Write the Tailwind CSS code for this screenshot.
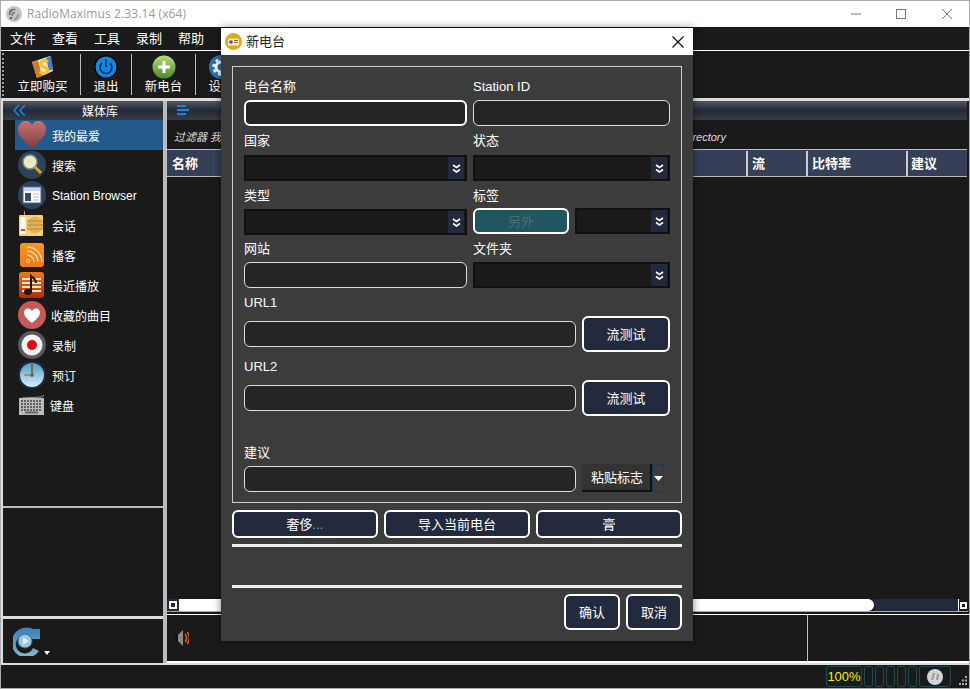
<!DOCTYPE html>
<html lang="zh">
<head>
  <meta charset="UTF-8" />
  <title>RadioMaximus</title>
  <script src="https://cdn.jsdelivr.net/npm/@tailwindcss/browser@4"></script>
</head>
<body class="w-[970px] h-[689px] overflow-hidden bg-[#1a1a1a] font-['Liberation_Sans','Noto_Sans_CJK_SC',sans-serif] text-[13px] text-white">

<div class="relative flex flex-col w-[970px] h-[689px] border-x border-b border-t border-[#aaa]">

  <!-- title bar -->
  <header class="flex items-center h-[26px] bg-white text-[#999] shrink-0">
    <svg class="ml-[5px] w-[16px] h-[16px]" viewBox="0 0 16 16">
      <circle cx="8" cy="8" r="8" fill="#c4c4c4"/>
      <g fill="none" stroke="#6a6a6a" stroke-width="1.300"><path d="M3.500 9a5.500 5.500 0 0 1 6-5.500M3.500 5.500A9 9 0 0 1 7 3M6 10a3 3 0 0 1 3-3.500"/></g>
      <circle cx="5" cy="12" r="1.300" fill="#6a6a6a"/><path d="M8 13a4 4 0 0 0 4-5" fill="none" stroke="#888" stroke-width="1.300"/>
    </svg>
    <span class="ml-[5px] text-[12px] font-['Open_Sans'] tracking-[0.1px]">RadioMaximus 2.33.14 (x64)</span>
    <div class="ml-auto flex items-center text-[#777]">
      <svg class="w-[12px] h-[12px]" viewBox="0 0 12 12"><path d="M1 6h10" stroke="#777"/></svg>
      <svg class="ml-[33px] w-[12px] h-[12px]" viewBox="0 0 12 12"><rect x="1.500" y="1.500" width="9" height="9" fill="none" stroke="#777"/></svg>
      <svg class="ml-[34px] mr-[16px] w-[12px] h-[12px]" viewBox="0 0 12 12"><path d="M1 1l10 10M11 1L1 11" stroke="#777"/></svg>
    </div>
  </header>

  <!-- menu -->
  <nav class="flex items-center gap-[16px] h-[22px] pl-[9px] pt-px border-b border-white shrink-0 box-content">
    <span>文件</span><span>查看</span><span>工具</span><span>录制</span><span>帮助</span>
  </nav>

  <!-- toolbar -->
  <div class="flex h-[47px] shrink-0 border-b-[3px] border-[#ddd] box-content text-[12.5px]">
    <div class="w-[3px] my-[2px] ml-[1px] border-l-2 border-dotted border-[#999]"></div>
    <div class="flex flex-col items-center w-[75px] pt-[4px]">
      <svg class="w-[24px] h-[24px]" viewBox="0 0 24 24">
        <path d="M1 7l18-6 3 15-16 7z" fill="#ece8d4"/><path d="M1 7l6-2 4 16-5 2z" fill="#c8822a"/><path d="M15 3l5-2 2 13-4 2z" fill="#4c7cc4"/>
        <path d="M17 7c-3-3-8-1-7 2.500s7 2 7 5.500-6 4.500-8 1.500" fill="none" stroke="#f2c21f" stroke-width="3"/>
      </svg>
      <span class="leading-[17px]">立即购买</span>
    </div>
    <div class="w-px my-[3px] bg-[#bbb]"></div>
    <div class="flex flex-col items-center w-[50px] pt-[4px]">
      <svg class="w-[24px] h-[24px]" viewBox="0 0 24 24">
        <circle cx="12" cy="12" r="12" fill="#050505"/><circle cx="12" cy="12" r="10.500" fill="#0a8ae6"/>
        <path d="M8 8a6 6 0 1 0 8 0" fill="none" stroke="#06294a" stroke-width="1.600"/><path d="M12 4.500V12" stroke="#06294a" stroke-width="1.600"/>
      </svg>
      <span class="leading-[17px]">退出</span>
    </div>
    <div class="w-px my-[3px] bg-[#bbb]"></div>
    <div class="flex flex-col items-center w-[63px] pt-[4px]">
      <svg class="w-[24px] h-[24px]" viewBox="0 0 24 24">
        <defs><linearGradient id="g1" x1="0" y1="0" x2="0" y2="1"><stop offset="0" stop-color="#b4dc7c"/><stop offset="1" stop-color="#4d8a24"/></linearGradient></defs>
        <circle cx="12" cy="12" r="11.500" fill="url(#g1)"/><path d="M12 6v12M6 12h12" stroke="#fff" stroke-width="3"/>
      </svg>
      <span class="leading-[17px]">新电台</span>
    </div>
    <div class="w-px my-[3px] bg-[#bbb]"></div>
    <div class="flex flex-col items-center w-[50px] pt-[4px]">
      <svg class="w-[24px] h-[24px]" viewBox="0 0 24 24">
        <circle cx="12" cy="12" r="12" fill="#2a72b0"/><circle cx="12" cy="12" r="5" fill="none" stroke="#fff" stroke-width="3"/><circle cx="12" cy="12" r="7.500" fill="none" stroke="#fff" stroke-width="2.500" stroke-dasharray="3 2.900"/>
      </svg>
      <span class="leading-[17px]">设置</span>
    </div>
  </div>

  <!-- panes -->
  <div class="flex flex-1 min-h-0 border-l-2 border-[#ddd]">

    <!-- left pane -->
    <aside class="flex flex-col w-[160px] shrink-0 text-[12px]">
      <div class="flex items-center h-[19px] bg-gradient-to-b from-[#555] via-[#232a3d] to-[#3c3c3c] shrink-0">
        <svg class="ml-[10px] w-[13px] h-[11px]" viewBox="0 0 13 11"><path d="M6 0L1 5.500l5 5.500M12 0L7 5.500l5 5.500" fill="none" stroke="#0a8ae6" stroke-width="1.600"/></svg>
        <span class="ml-[56px] pt-[3px]">媒体库</span>
      </div>
      <ul class="h-[388px] shrink-0 border-b-2 border-[#bbb]">
        <li class="flex items-center h-[30px] ml-[12px] bg-[#235a8a]">
          <svg class="ml-[3px] w-[28px] h-[28px]" viewBox="0 0 28 28">
            <defs><linearGradient id="g2" x1="0" y1="0" x2="0" y2="1"><stop offset="0" stop-color="#c8736e"/><stop offset="1" stop-color="#7d3c44"/></linearGradient></defs>
            <path d="M14 27C4 19 0 14 0 8.500 0 3 4 0 7.500 0 10.500 0 13 1.500 14 4c1-2.500 3.500-4 6.500-4C24 0 28 3 28 8.500 28 14 24 19 14 27z" fill="url(#g2)"/>
          </svg>
          <span class="ml-[6px] pt-[4px]">我的最爱</span>
        </li>
        <li class="flex items-center h-[30px] pl-[15px]">
          <svg class="w-[28px] h-[28px]" viewBox="0 0 28 28">
            <circle cx="14" cy="14" r="14" fill="#2c4456"/><circle cx="12" cy="11" r="7" fill="#ece8c0" stroke="#7a8a96" stroke-width="1.500"/><path d="M17 16l6 6" stroke="#e0a030" stroke-width="3"/>
          </svg>
          <span class="ml-[6px] pt-[4px]">搜索</span>
        </li>
        <li class="flex items-center h-[30px] pl-[15px]">
          <svg class="w-[28px] h-[28px]" viewBox="0 0 28 28">
            <circle cx="14" cy="14" r="14" fill="#2c4456"/><rect x="5" y="6" width="18" height="16" fill="#fff" stroke="#4a58a8"/><rect x="6" y="7" width="16" height="3" fill="#c9d4e8"/><rect x="7" y="12" width="6" height="8" fill="#3c4a6a"/><path d="M15 13h6M15 16h6M15 19h6" stroke="#bbb"/>
          </svg>
          <span class="ml-[6px] pt-[2px]">Station Browser</span>
        </li>
        <li class="flex items-center h-[30px] pl-[15px]">
          <svg class="w-[28px] h-[28px]" viewBox="0 0 28 28">
            <path d="M6 0h1v6H6z" fill="#999"/><rect x="1" y="4" width="24" height="21" rx="1" fill="#f6cf77"/><rect x="2.500" y="6" width="5" height="17" fill="#fff"/><rect x="3" y="18" width="4" height="2" fill="#d84a3a"/>
            <circle cx="17" cy="14" r="8" fill="#dfb15a"/><path d="M9 10h16M9 14h16M9 18h16" stroke="#b98a38"/>
          </svg>
          <span class="ml-[6px] pt-[4px]">会话</span>
        </li>
        <li class="flex items-center h-[30px] pl-[15px]">
          <svg class="w-[28px] h-[28px]" viewBox="0 0 28 28">
            <defs><linearGradient id="g3" x1="0" y1="0" x2="0" y2="1"><stop offset="0" stop-color="#f7941d"/><stop offset="1" stop-color="#ef7a1a"/></linearGradient></defs>
            <rect x="2" y="2" width="24" height="24" rx="3" fill="url(#g3)"/>
            <path d="M9 14a7 7 0 0 1 7 7M9 10a11 11 0 0 1 11 11M9 6a15 15 0 0 1 15 15" fill="none" stroke="#fdd8a8" stroke-width="1.300"/><circle cx="10" cy="20" r="1.600" fill="none" stroke="#fdd8a8"/>
          </svg>
          <span class="ml-[6px] pt-[4px]">播客</span>
        </li>
        <li class="flex items-center h-[30px] pl-[15px]">
          <svg class="w-[28px] h-[28px]" viewBox="0 0 28 28">
            <defs><linearGradient id="g4" x1="0" y1="0" x2="0" y2="1"><stop offset="0" stop-color="#ee7a1f"/><stop offset="1" stop-color="#b02c05"/></linearGradient></defs>
            <rect x="1" y="1" width="25" height="26" rx="3" fill="url(#g4)"/>
            <path d="M4 8h19M4 12h19M4 16h19M4 20h19" stroke="#fde9d0" stroke-width="2"/>
            <ellipse cx="10" cy="21" rx="4" ry="3" fill="#1a1a1a"/><path d="M13 21V5c2 2 5 3 5 7" fill="none" stroke="#1a1a1a" stroke-width="2"/>
          </svg>
          <span class="ml-[5px] pt-[4px]">最近播放</span>
        </li>
        <li class="flex items-center h-[30px] pl-[15px]">
          <svg class="w-[28px] h-[28px]" viewBox="0 0 28 28">
            <circle cx="14" cy="14" r="14" fill="#c45a5a"/><path d="M14 22C8 17 6 14.500 6 11.500 6 9 8 7.500 10 7.500c1.800 0 3.300 1 4 2.500.7-1.500 2.200-2.500 4-2.500 2 0 4 1.500 4 4 0 3-2 5.500-8 10.500z" fill="#fff"/>
          </svg>
          <span class="ml-[5px] pt-[4px]">收藏的曲目</span>
        </li>
        <li class="flex items-center h-[30px] pl-[15px]">
          <svg class="w-[28px] h-[28px]" viewBox="0 0 28 28">
            <circle cx="14" cy="14" r="14" fill="#5a5a5a"/><circle cx="14" cy="14" r="10.500" fill="#f2f2f2"/><circle cx="14" cy="14" r="5" fill="#e00a14"/>
          </svg>
          <span class="ml-[6px] pt-[4px]">录制</span>
        </li>
        <li class="flex items-center h-[30px] pl-[15px]">
          <svg class="w-[28px] h-[28px]" viewBox="0 0 28 28">
            <defs><linearGradient id="g5" x1="0" y1="0" x2="0" y2="1"><stop offset="0" stop-color="#4f9cc8"/><stop offset="1" stop-color="#d6f0fc"/></linearGradient></defs>
            <circle cx="14" cy="14" r="14" fill="#1f2a44"/><circle cx="14" cy="14" r="12" fill="url(#g5)"/>
            <path d="M14 3v11" stroke="#6b5a2a" stroke-width="1.500"/><path d="M6 14h8" stroke="#c0913a" stroke-width="2"/><circle cx="14" cy="14" r="2" fill="#5a6a8a"/>
          </svg>
          <span class="ml-[6px] pt-[4px]">预订</span>
        </li>
        <li class="flex items-center h-[30px] pl-[15px]">
          <svg class="w-[28px] h-[28px]" viewBox="0 0 28 28">
            <path d="M4 7l20-1 2-2" fill="none" stroke="#999"/><rect x="1" y="7" width="25" height="17" fill="#bbb"/>
            <path d="M3 10h21M3 13h21M3 16h21M3 19h21" stroke="#444" stroke-width="1.500" stroke-dasharray="2 1"/><rect x="7" y="20.500" width="13" height="2" fill="#666"/>
          </svg>
          <span class="ml-[4px] pt-[4px]">键盘</span>
        </li>
      </ul>
      <div class="h-[108px] shrink-0"></div>
      <div class="flex items-center h-[46px] border-t-[3px] border-[#ddd] shrink-0 pl-[10px]">
        <svg class="w-[28px] h-[30px]" viewBox="0 0 28 30">
          <defs><linearGradient id="g6" x1="0" y1="0" x2="0" y2="1"><stop offset="0" stop-color="#3a7fb8"/><stop offset="1" stop-color="#7fb8dc"/></linearGradient></defs>
          <path d="M27 3v10h-8a9 9 0 1 0 1 9l6 3A15 15 0 1 1 20 3z" fill="url(#g6)"/>
          <circle cx="12" cy="15" r="7" fill="#9cc6dc" stroke="#2f6a94"/><path d="M10 11l6 4-6 4z" fill="#dcecf4"/>
        </svg>
        <svg class="ml-[3px] mt-[24px] w-[6px] h-[4px]" viewBox="0 0 6 4"><path d="M0 0h6L3 4z" fill="#fff"/></svg>
      </div>
    </aside>

    <!-- splitter -->
    <div class="w-[4px] bg-[#bbb] shrink-0"></div>

    <!-- right pane -->
    <main class="flex flex-col flex-1 min-w-0">
      <div class="flex items-center h-[19px] bg-gradient-to-b from-[#555] via-[#232a3d] to-[#3c3c3c] mr-[2px] shrink-0">
        <svg class="ml-[10px] w-[13px] h-[11px]" viewBox="0 0 13 11"><path d="M0 1h9M0 5h12M0 9h9" stroke="#0a8ae6" stroke-width="2"/></svg>
      </div>
      <div class="flex items-center justify-between w-[559px] h-[29px] pl-[7px] pt-[6px] text-[11px] italic text-[#ddd] shrink-0">
        <span class="whitespace-nowrap">过滤器 我</span><span>Station Directory</span>
      </div>
      <div class="flex h-[28px] bg-[#354058] font-bold border-y border-[#bbb] mr-[2px] pt-px shrink-0">
        <div class="flex items-center flex-1 pl-[5px]">名称</div>
        <div class="flex items-center w-[60px] pl-[4px] border-l-2 border-[#ccc]">流</div>
        <div class="flex items-center w-[100px] pl-[4px] border-l-2 border-[#ccc]">比特率</div>
        <div class="flex items-center w-[61px] pl-[3px] border-l-2 border-[#ccc]">建议</div>
      </div>
      <div class="flex-1"></div>
      <div class="flex items-stretch h-[13px] mr-[1px] border-b-[1px] border-[#aaa] shrink-0">
        <div class="flex items-center justify-center w-[12px] bg-[#232a3d]"><div class="w-[8px] h-[8px] border-[2px] border-white"></div></div>
        <div class="flex-1 bg-white rounded-r-md"></div>
        <div class="w-[84px] bg-[#232a3d]"></div>
        <div class="flex items-center justify-center w-[10px] border-l border-white"><div class="w-[7px] h-[7px] border-[2px] border-white"></div></div>
      </div>
      <div class="flex h-[49px] mt-[2px] border-t border-white border-b-[2px] shrink-0">
        <div class="flex items-center w-[641px] pl-[8px] border-r border-[#e0d020]">
          <svg class="w-[14px] h-[18px]" viewBox="0 0 14 18">
            <rect x="0" y="6" width="3" height="6" fill="#111"/><path d="M3 6l5-5v16L3 12z" fill="#8a8a8a"/><path d="M10 5c2 2 2 6 0 8M12 3c3 3 3 9 0 12" fill="none" stroke="#e0651a" stroke-width="1.500"/>
          </svg>
        </div>
      </div>
    </main>
  </div>

  <!-- status bar -->
  <footer class="flex items-center justify-end h-[25px] shrink-0 border-t-[2px] border-[#ddd] pr-[1px]">
    <div class="flex items-center justify-center w-[36px] h-[21px] border border-[#1d4a50] rounded-[3px] text-[13px] text-[#f0f000]">100%</div>
    <div class="ml-[2px] w-[9px] h-[21px] border border-[#1d4a50] rounded-[3px]"></div>
    <div class="ml-[2px] w-[9px] h-[21px] border border-[#1d4a50] rounded-[3px]"></div>
    <div class="ml-[2px] w-[9px] h-[21px] border border-[#1d4a50] rounded-[3px]"></div>
    <div class="ml-[2px] w-[9px] h-[21px] border border-[#1d4a50] rounded-[3px]"></div>
    <div class="ml-[2px] w-[9px] h-[21px] border border-[#1d4a50] rounded-[3px]"></div>
    <div class="flex items-center justify-center ml-[2px] w-[32px] h-[21px] border border-[#1d4a50] rounded-[3px]">
      <svg class="w-[16px] h-[16px]" viewBox="0 0 16 16"><circle cx="8" cy="8" r="8" fill="#d4d4d4"/><path d="M7 4L5 11M11 5l-1 6" stroke="#999" stroke-width="2"/></svg>
    </div>
    <svg class="ml-[7px] mt-[9px] w-[10px] h-[10px]" viewBox="0 0 10 10"><path d="M7 0h2v2H7zM4 3.500h2v2H4zM7 3.500h2v2H7zM1 7h2v2H1zM4 7h2v2H4zM7 7h2v2H7z" fill="#aaa"/></svg>
  </footer>

  <!-- new station dialog -->
  <div class="absolute left-[220px] top-[27px] flex flex-col w-[472px] h-[613px] bg-[#3c3c3c] shadow-[0_0_8px_rgba(0,0,0,0.5)]">
    <div class="flex items-center h-[27px] bg-white text-[#222] shrink-0">
      <svg class="ml-[4px] w-[17px] h-[17px]" viewBox="0 0 17 17">
        <circle cx="8.500" cy="8.500" r="8.500" fill="#e2a90f"/><rect x="3" y="5.500" width="11" height="7" rx="1" fill="#f3ecd2"/><circle cx="6" cy="9" r="1.800" fill="#555"/><path d="M9 7.500h4M9 9.500h4" stroke="#b06a30"/>
      </svg>
      <span class="ml-[4px]">新电台</span>
      <svg class="ml-auto mr-[9px] w-[12px] h-[12px]" viewBox="0 0 12 12"><path d="M.5.500l11 11M11.500.500l-11 11" stroke="#111" stroke-width="1.200"/></svg>
    </div>

    <div class="flex flex-col flex-1 px-[11px] pt-[11px]">
      <section class="h-[437px] border border-[#ccc] px-[11px] pt-[5px]">
        <div class="grid grid-cols-[223px_197px] gap-x-[6px]">
          <div class="h-[28px] flex items-center pt-[2px]">电台名称</div>
          <div class="h-[28px] flex items-center pt-[2px]">Station ID</div>
          <div class="h-[26px] bg-[#252525] border-2 border-white rounded-md"></div>
          <div class="h-[26px] bg-[#252525] border border-[#ddd] rounded-md"></div>

          <div class="h-[29px] flex items-center">国家</div>
          <div class="h-[29px] flex items-center">状态</div>
          <div class="flex justify-end h-[26px] bg-[#1a1a1a] border-2 border-[#111]">
            <div class="flex items-center justify-center w-[16px] mr-px bg-[#232a3d]"><svg class="w-[9px] h-[9px]" viewBox="0 0 9 9"><path d="M1 1l3.500 2.500L8 1M1 5.500L4.500 8 8 5.500" fill="none" stroke="#fff" stroke-width="1.600"/></svg></div>
          </div>
          <div class="flex justify-end h-[26px] bg-[#1a1a1a] border-2 border-[#111]">
            <div class="flex items-center justify-center w-[16px] mr-px bg-[#232a3d]"><svg class="w-[9px] h-[9px]" viewBox="0 0 9 9"><path d="M1 1l3.500 2.500L8 1M1 5.500L4.500 8 8 5.500" fill="none" stroke="#fff" stroke-width="1.600"/></svg></div>
          </div>

          <div class="h-[28px] flex items-center pt-[1px]">类型</div>
          <div class="h-[28px] flex items-center pt-[1px]">标签</div>
          <div class="flex justify-end h-[26px] bg-[#1a1a1a] border-2 border-[#111]">
            <div class="flex items-center justify-center w-[16px] mr-px bg-[#232a3d]"><svg class="w-[9px] h-[9px]" viewBox="0 0 9 9"><path d="M1 1l3.500 2.500L8 1M1 5.500L4.500 8 8 5.500" fill="none" stroke="#fff" stroke-width="1.600"/></svg></div>
          </div>
          <div class="flex gap-[6px] h-[26px] -mt-px">
            <button class="w-[96px] h-[26px] bg-[#1f565f] border-2 border-white rounded-md text-[#4d6e72] pt-px">另外</button>
            <div class="flex justify-end w-[95px] h-[26px] bg-[#1a1a1a] border-2 border-[#111]">
              <div class="flex items-center justify-center w-[16px] mr-px bg-[#232a3d]"><svg class="w-[9px] h-[9px]" viewBox="0 0 9 9"><path d="M1 1l3.500 2.500L8 1M1 5.500L4.500 8 8 5.500" fill="none" stroke="#fff" stroke-width="1.600"/></svg></div>
            </div>
          </div>

          <div class="h-[27px] flex items-center">网站</div>
          <div class="h-[27px] flex items-center">文件夹</div>
          <div class="h-[26px] bg-[#252525] border border-[#ddd] rounded-md"></div>
          <div class="flex justify-end h-[26px] bg-[#1a1a1a] border-2 border-[#111]">
            <div class="flex items-center justify-center w-[16px] mr-px bg-[#232a3d]"><svg class="w-[9px] h-[9px]" viewBox="0 0 9 9"><path d="M1 1l3.500 2.500L8 1M1 5.500L4.500 8 8 5.500" fill="none" stroke="#fff" stroke-width="1.600"/></svg></div>
          </div>
        </div>

        <div class="h-[28px] flex items-center pt-[2px]">URL1</div>
        <div class="flex items-center gap-[6px] h-[36px]">
          <div class="w-[332px] h-[26px] bg-[#252525] border border-[#ddd] rounded-md"></div>
          <button class="w-[88px] h-[36px] bg-[#232a3d] border-2 border-white rounded-md pt-px">流测试</button>
        </div>
        <div class="h-[28px] flex items-center pt-[2px]">URL2</div>
        <div class="flex items-center gap-[6px] h-[36px]">
          <div class="w-[332px] h-[26px] bg-[#252525] border border-[#ddd] rounded-md"></div>
          <button class="w-[88px] h-[36px] bg-[#232a3d] border-2 border-white rounded-md pt-px">流测试</button>
        </div>
        <div class="h-[28px] mt-[22px] flex items-center pt-[2px]">建议</div>
        <div class="flex items-start gap-[6px] h-[26px]">
          <div class="w-[332px] h-[26px] bg-[#252525] border border-[#ddd] rounded-md"></div>
          <div class="flex h-[28px] -mt-[2px]">
            <button class="w-[70px] pl-[2px] pt-px bg-[#333] border-b-2 border-r-2 border-[#111]">粘贴标志</button>
            <div class="flex items-center justify-center w-[12px] border border-[#1f3a55]"><svg class="w-[9px] h-[5px]" viewBox="0 0 9 5"><path d="M0 0h9L4.500 5z" fill="#fff"/></svg></div>
          </div>
        </div>
      </section>

      <div class="grid grid-cols-3 gap-[6px] mt-[7px]">
        <button class="h-[28px] pt-px bg-[#232a3d] border-2 border-white rounded-md">奢侈<span class="text-[#5ab0ee]">...</span></button>
        <button class="h-[28px] pt-px bg-[#232a3d] border-2 border-white rounded-md">导入当前电台</button>
        <button class="h-[28px] pt-px bg-[#232a3d] border-2 border-white rounded-md">膏</button>
      </div>
      <div class="h-[3px] mt-[6px] bg-[#eee] shrink-0"></div>
      <div class="h-[3px] mt-[38px] bg-[#eee] shrink-0"></div>
      <div class="flex justify-end gap-[6px] mt-[6px]">
        <button class="w-[56px] h-[36px] pt-px bg-[#232a3d] border-2 border-white rounded-md">确认</button>
        <button class="w-[56px] h-[36px] pt-px bg-[#232a3d] border-2 border-white rounded-md">取消</button>
      </div>
    </div>
  </div>
</div>

</body>
</html>
